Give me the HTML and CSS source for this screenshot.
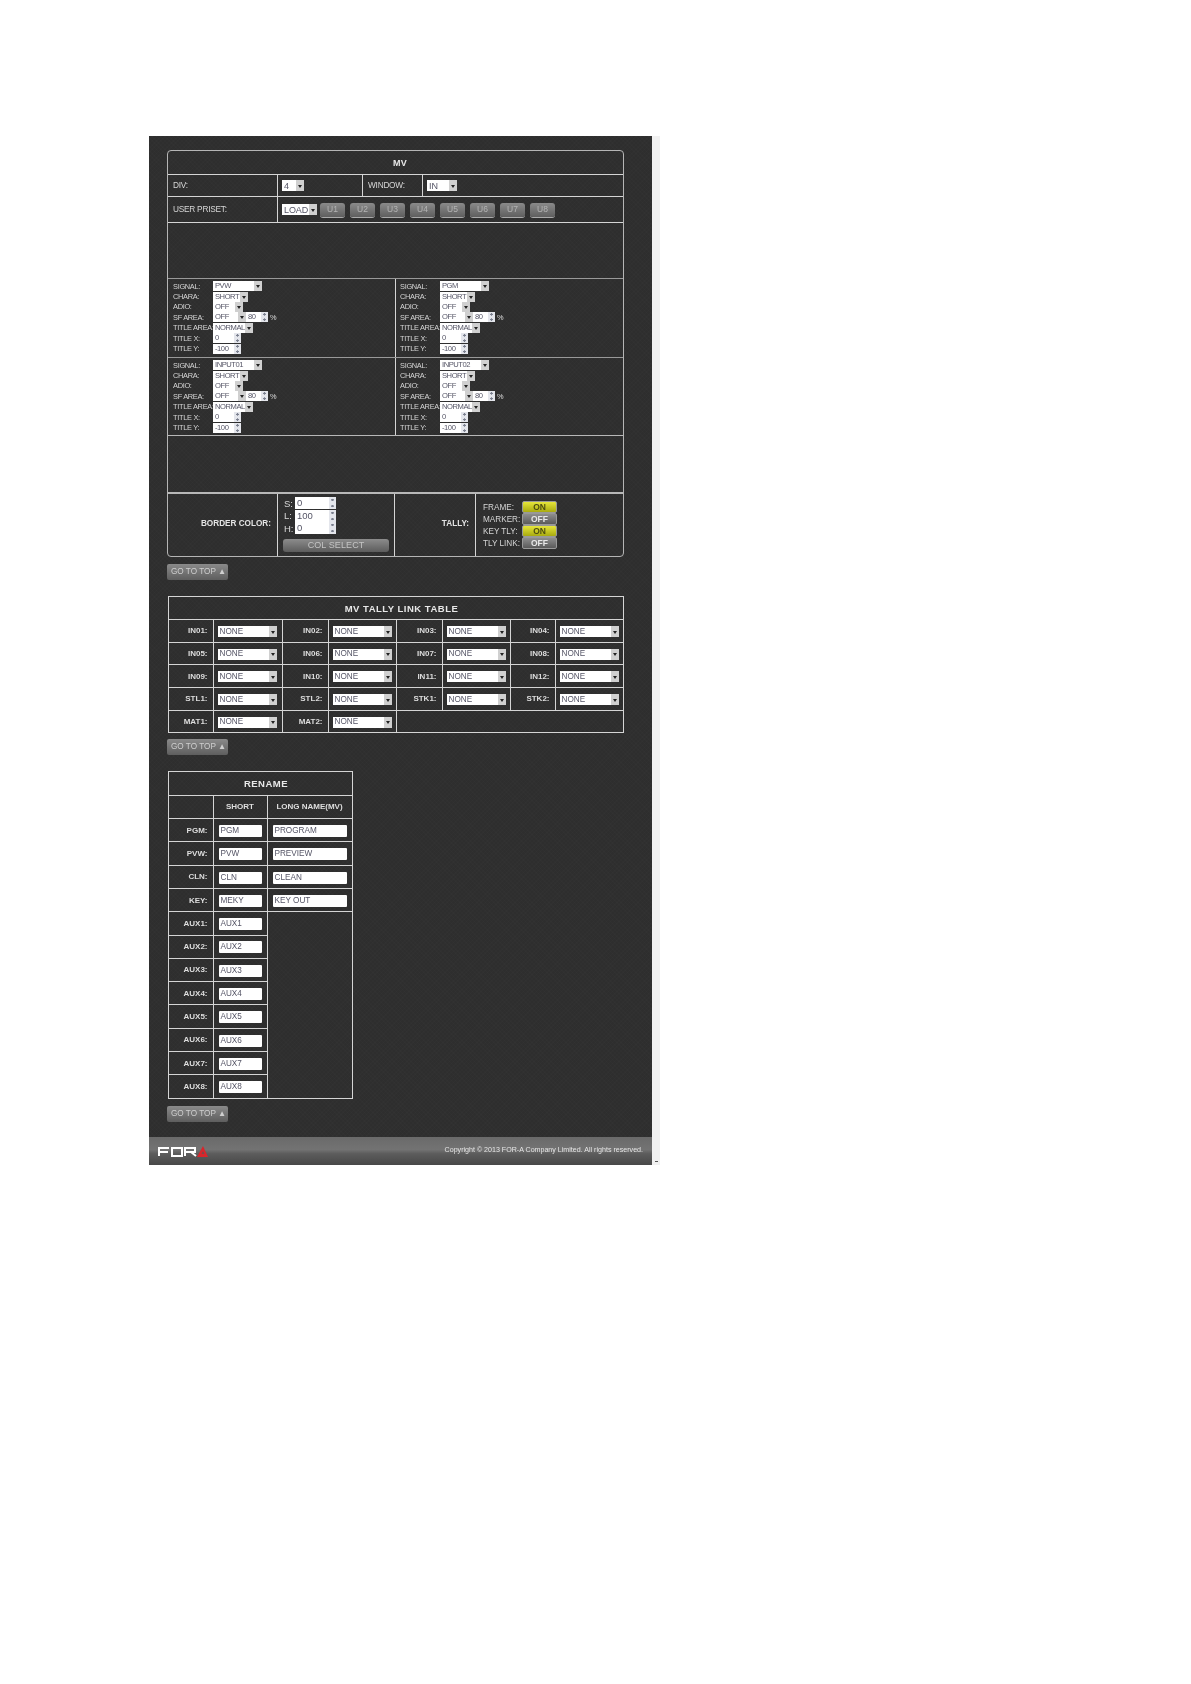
FILE: index.html
```html
<!DOCTYPE html>
<html lang="en">
<head>
<meta charset="utf-8">
<title>MV</title>
<link rel="stylesheet" href="styles.css">
</head>
<body>
<div class="page">
<main class="panel">
  <section class="mv">
    <div class="row r-title"><h2 class="title">MV</h2></div>
    <div class="row r-div">
      <div class="cell lbl">DIV:</div>
      <div class="cell ctl"><span class="sel w22">4</span></div>
      <div class="cell lbl lbl-w">WINDOW:</div>
      <div class="cell ctl ctl-w"><span class="sel w30">IN</span></div>
    </div>
    <div class="row r-preset">
      <div class="cell lbl">USER PRISET:</div>
      <div class="cell ctl presets">
        <span class="sel w35">LOAD</span>
        <span class="pbtn">U1</span><span class="pbtn">U2</span><span class="pbtn">U3</span><span class="pbtn">U4</span><span class="pbtn">U5</span><span class="pbtn">U6</span><span class="pbtn">U7</span><span class="pbtn">U8</span>
      </div>
    </div>
    <div class="row r-blank1"></div>
    <div class="row r-q1">
      <div class="quad">
        <span>SIGNAL:</span><div><span class="sel w49">PVW</span></div>
        <span>CHARA:</span><div><span class="sel w35">SHORT</span></div>
        <span>ADIO:</span><div><span class="sel w30">OFF</span></div>
        <span>SF AREA:</span><div class="sf"><span class="sel w33">OFF</span><span class="spin w22">80</span><span class="pct">%</span></div>
        <span>TITLE AREA:</span><div><span class="sel w40">NORMAL</span></div>
        <span>TITLE X:</span><div><span class="spin w28">0</span></div>
        <span>TITLE Y:</span><div><span class="spin w28">-100</span></div>
      </div>
      <div class="quad q-right">
        <span>SIGNAL:</span><div><span class="sel w49">PGM</span></div>
        <span>CHARA:</span><div><span class="sel w35">SHORT</span></div>
        <span>ADIO:</span><div><span class="sel w30">OFF</span></div>
        <span>SF AREA:</span><div class="sf"><span class="sel w33">OFF</span><span class="spin w22">80</span><span class="pct">%</span></div>
        <span>TITLE AREA:</span><div><span class="sel w40">NORMAL</span></div>
        <span>TITLE X:</span><div><span class="spin w28">0</span></div>
        <span>TITLE Y:</span><div><span class="spin w28">-100</span></div>
      </div>
    </div>
    <div class="row r-q2">
      <div class="quad">
        <span>SIGNAL:</span><div><span class="sel w49">INPUT01</span></div>
        <span>CHARA:</span><div><span class="sel w35">SHORT</span></div>
        <span>ADIO:</span><div><span class="sel w30">OFF</span></div>
        <span>SF AREA:</span><div class="sf"><span class="sel w33">OFF</span><span class="spin w22">80</span><span class="pct">%</span></div>
        <span>TITLE AREA:</span><div><span class="sel w40">NORMAL</span></div>
        <span>TITLE X:</span><div><span class="spin w28">0</span></div>
        <span>TITLE Y:</span><div><span class="spin w28">-100</span></div>
      </div>
      <div class="quad q-right">
        <span>SIGNAL:</span><div><span class="sel w49">INPUT02</span></div>
        <span>CHARA:</span><div><span class="sel w35">SHORT</span></div>
        <span>ADIO:</span><div><span class="sel w30">OFF</span></div>
        <span>SF AREA:</span><div class="sf"><span class="sel w33">OFF</span><span class="spin w22">80</span><span class="pct">%</span></div>
        <span>TITLE AREA:</span><div><span class="sel w40">NORMAL</span></div>
        <span>TITLE X:</span><div><span class="spin w28">0</span></div>
        <span>TITLE Y:</span><div><span class="spin w28">-100</span></div>
      </div>
    </div>
    <div class="row r-blank2"></div>
    <div class="row r-bottom">
      <div class="cell blbl">BORDER COLOR:</div>
      <div class="cell color">
        <div class="sli"><span>S:</span><span class="spin w41">0</span></div>
        <div class="sli"><span>L:</span><span class="spin w41">100</span></div>
        <div class="sli"><span>H:</span><span class="spin w41">0</span></div>
        <span class="colbtn">COL SELECT</span>
      </div>
      <div class="cell blbl">TALLY:</div>
      <div class="cell tally">
        <span>FRAME:</span><span class="led on">ON</span>
        <span>MARKER:</span><span class="led">OFF</span>
        <span>KEY TLY:</span><span class="led on">ON</span>
        <span>TLY LINK:</span><span class="led">OFF</span>
      </div>
    </div>
  </section>

  <a class="top top1">GO TO TOP &#9650;</a>

  <table class="tbl link">
    <colgroup><col class="c45"><col class="c69"><col class="c46"><col class="c68"><col class="c46"><col class="c68"><col class="c45"><col></colgroup>
    <tr class="h23"><th colspan="8" class="ttl">MV TALLY LINK TABLE</th></tr>
    <tr>
      <th>IN01:</th><td><span class="sel w59">NONE</span></td><th>IN02:</th><td><span class="sel w59">NONE</span></td><th>IN03:</th><td><span class="sel w59">NONE</span></td><th>IN04:</th><td><span class="sel w59">NONE</span></td>
    </tr>
    <tr>
      <th>IN05:</th><td><span class="sel w59">NONE</span></td><th>IN06:</th><td><span class="sel w59">NONE</span></td><th>IN07:</th><td><span class="sel w59">NONE</span></td><th>IN08:</th><td><span class="sel w59">NONE</span></td>
    </tr>
    <tr>
      <th>IN09:</th><td><span class="sel w59">NONE</span></td><th>IN10:</th><td><span class="sel w59">NONE</span></td><th>IN11:</th><td><span class="sel w59">NONE</span></td><th>IN12:</th><td><span class="sel w59">NONE</span></td>
    </tr>
    <tr>
      <th>STL1:</th><td><span class="sel w59">NONE</span></td><th>STL2:</th><td><span class="sel w59">NONE</span></td><th>STK1:</th><td><span class="sel w59">NONE</span></td><th>STK2:</th><td><span class="sel w59">NONE</span></td>
    </tr>
    <tr>
      <th>MAT1:</th><td><span class="sel w59">NONE</span></td><th>MAT2:</th><td><span class="sel w59">NONE</span></td><td colspan="4"></td>
    </tr>
  </table>

  <a class="top top2">GO TO TOP &#9650;</a>

  <table class="tbl rename">
    <colgroup><col class="c45"><col class="c54"><col></colgroup>
    <tr><th colspan="3" class="ttl">RENAME</th></tr>
    <tr><th></th><th class="ctr">SHORT</th><th class="ctr">LONG NAME(MV)</th></tr>
    <tr><th>PGM:</th><td><span class="txt s">PGM</span></td><td><span class="txt l">PROGRAM</span></td></tr>
    <tr><th>PVW:</th><td><span class="txt s">PVW</span></td><td><span class="txt l">PREVIEW</span></td></tr>
    <tr><th>CLN:</th><td><span class="txt s">CLN</span></td><td><span class="txt l">CLEAN</span></td></tr>
    <tr><th>KEY:</th><td><span class="txt s">MEKY</span></td><td><span class="txt l">KEY OUT</span></td></tr>
    <tr><th>AUX1:</th><td><span class="txt s">AUX1</span></td><td rowspan="8"></td></tr>
    <tr><th>AUX2:</th><td><span class="txt s">AUX2</span></td></tr>
    <tr><th>AUX3:</th><td><span class="txt s">AUX3</span></td></tr>
    <tr><th>AUX4:</th><td><span class="txt s">AUX4</span></td></tr>
    <tr><th>AUX5:</th><td><span class="txt s">AUX5</span></td></tr>
    <tr><th>AUX6:</th><td><span class="txt s">AUX6</span></td></tr>
    <tr><th>AUX7:</th><td><span class="txt s">AUX7</span></td></tr>
    <tr><th>AUX8:</th><td><span class="txt s">AUX8</span></td></tr>
  </table>

  <a class="top top3">GO TO TOP &#9650;</a>

  <footer class="foot">
    <svg class="logo" viewBox="0 0 50 11" width="50" height="11" aria-label="FOR-A logo">
      <path d="M1 10V2H11M1 6H10" fill="none" stroke="#fff" stroke-width="2"/>
      <path d="M14 2H24V10H14Z" fill="none" stroke="#fff" stroke-width="2"/>
      <path d="M27 10V2H37V6H27M33 6L38 10" fill="none" stroke="#fff" stroke-width="2"/>
      <path d="M39 11L45 0L50 11Z" fill="#d8262c"/>
      <path d="M43.5 8L45 5L46.500 8Z" fill="#7a4a4a"/>
    </svg>
    <span class="copy">Copyright &copy; 2013 FOR-A Company Limited. All rights reserved.</span>
  </footer>
</main>
<aside class="bar"><span class="bar-arrow"></span></aside>
</div>
</body>
</html>
```
FILE: styles.css
```css
* { box-sizing: border-box; }
html, body { margin: 0; background: #fff; }
body { font-family: "Liberation Sans", Arial, sans-serif; color: #d8d8d8; min-height: 1684px; }
.page { display: flex; align-items: stretch; padding: 136px 0 0 149px; }
.panel {
  width: 503px; height: 1029px; display: flex; flex-direction: column;
  padding: 14px 0 0 18px;
  background-color: #2e2e2e;
  background-image: repeating-linear-gradient(45deg, rgba(255,255,255,.012) 0 1px, transparent 1px 3px),
                    repeating-linear-gradient(-45deg, rgba(255,255,255,.012) 0 1px, transparent 1px 3px);
  filter: blur(.35px);
}
.bar { width: 8px; height: 1029px; background: #f1f1f1; position: relative; }
.bar-arrow { position: absolute; left: 3px; bottom: 3px; width: 3px; height: 1px; background: #555; }

/* MV block */
.mv {
  width: 457px; height: 407px; border: 1px solid #b5b5b5; border-radius: 4px;
  display: grid; grid-template-rows: 23px 22px 26px 56px 79px 78px 57px 64px;
}
.row { border-top: 1px solid #d5d5d5; display: grid; }
.r-title { border-top: 0; place-items: center; padding: 1px 0 0 9px; }
.title { margin: 0; font-size: 9px; font-weight: bold; letter-spacing: .3px; color: #e8e8e8; }
.r-div { grid-template-columns: 109px 85px 60px 1fr; }
.r-preset { grid-template-columns: 109px 1fr; border-top-width: 1px; }
.r-q1, .r-q2 { grid-template-columns: 227px 1fr; border-top-color: #999; }
.r-blank2 { border-top-color: #b8b8b8; }
.r-bottom { grid-template-columns: 109px 117px 81px 1fr; border-top: 2px solid #b8b8b8; }
.cell { display: flex; align-items: center; border-left: 1px solid #d5d5d5; font-size: 8.300px; letter-spacing: -.25px; }
.cell:first-child { border-left: 0; }
.lbl { padding: 0 0 1px 5px; color: #d6d6d6; }
.ctl { padding-left: 4px; letter-spacing: 0; }
.lbl-w { padding-left: 5px; }
.presets { gap: 5px; }
.presets .sel { margin-right: -2px; }
.pbtn {
  width: 25px; height: 14px; border-radius: 3px; background: linear-gradient(#8a8a8a, #5f5f5f);
  color: #b4b4b4; font-size: 8.500px; text-align: center; line-height: 13px;
  box-shadow: 0 1px 0 #aaa;
}

/* select / spinner */
.sel, .spin, .txt {
  display: inline-flex; align-items: center; background: #fff; color: #556; font-size: 7.600px;
  height: 10px; line-height: 10px; vertical-align: middle; padding-left: 2px; position: relative;
  overflow: hidden; white-space: nowrap; letter-spacing: -.45px;
}
.ctl .sel { height: 11px; font-size: 9px; letter-spacing: -.1px; }
.sel::after {
  content: ""; position: absolute; right: 0; top: 0; bottom: 0; width: 8px; background: #d0d0d0;
}
.sel::before {
  content: ""; position: absolute; right: 2px; top: 50%; margin-top: -1px; z-index: 1;
  border: 2px solid transparent; border-top: 3px solid #222; border-bottom: 0;
}
.spin::after {
  content: ""; position: absolute; right: 0; top: 0; bottom: 0; width: 7px;
  background: radial-gradient(circle at 50% 24%, #7a7f8e 1px, transparent 1.4px),
              radial-gradient(circle at 50% 76%, #7a7f8e 1px, transparent 1.4px), #e4e6ec;
}
.w22 { width: 22px; } .w30 { width: 30px; } .w35 { width: 35px; } .w49 { width: 49px; }
.w33 { width: 33px; } .w40 { width: 40px; } .w28 { width: 28px; }
.w41 { width: 41px; height: 12px; font-size: 9.500px; letter-spacing: 0; }
.w59 { width: 59px; height: 11px; font-size: 8.200px; letter-spacing: 0; }

/* quad cells */
.quad {
  display: grid; grid-template-columns: 40px 1fr; grid-auto-rows: 10.400px; align-items: center;
  padding: 2px 0 0 5px; font-size: 7.400px; letter-spacing: -.3px; color: #d6d6d6; white-space: nowrap;
}
.q-right { border-left: 1px solid #d5d5d5; padding-left: 4px; }
.quad > div { display: flex; align-items: center; }
.sf .pct { margin-left: 2px; color: #ddd; }

/* bottom row */
.blbl { justify-content: flex-end; padding: 0 6px 4px 0; font-weight: bold; font-size: 8.200px; letter-spacing: 0; color: #e4e4e4; }
.color { display: flex; flex-direction: column; align-items: flex-start; padding: 3px 0 0 5px; font-size: 9.500px; letter-spacing: 0; }
.sli { display: flex; height: 12.500px; align-items: center; gap: 5px; margin-left: 1px; width: 60px; }
.sli > span:first-child { width: 6px; }
.colbtn {
  margin-top: 4px; width: 106px; height: 13px; border-radius: 3px; background: linear-gradient(#8c8c8c, #5c5c5c);
  color: #c4c4c4; text-align: center; font-size: 9px; line-height: 13px; letter-spacing: .1px;
}
.tally {
  display: grid; grid-template-columns: 39px 35px; grid-auto-rows: 12px; align-content: center;
  padding-left: 7px; font-size: 8.200px; letter-spacing: 0; color: #d6d6d6; white-space: nowrap; align-items: center;
}
.led {
  height: 12px; border: 1px solid #999; border-radius: 2px; background: linear-gradient(#8e8e8e, #5a5a5a);
  color: #e8e8e8; font-size: 8.500px; font-weight: bold; text-align: center; line-height: 10px;
}
.led.on { background: linear-gradient(#e6e63a, #a8aa10); color: #4c4c10; }

/* go to top */
.top {
  display: block; width: 61px; height: 16px; border-radius: 2px; background: linear-gradient(#8a8a8a, #5e5e5e);
  color: #cfcfcf; font-size: 8.200px; line-height: 15px; padding-left: 4px; white-space: nowrap;
}
.top1 { margin-top: 7px; }
.top2 { margin-top: 6px; }
.top3 { margin-top: 7px; }

/* tables */
.tbl { border-collapse: collapse; table-layout: fixed; }
.tbl th, .tbl td { border: 1px solid #d5d5d5; padding: 0; vertical-align: middle; }
.tbl th { text-align: right; padding-right: 5px; font-size: 8px; font-weight: bold; color: #dedede; }
.tbl td { padding-left: 4px; }
.tbl .ttl { text-align: center; font-size: 9.500px; color: #e8e8e8; letter-spacing: .5px; padding: 0 0 0 12px; }
.tbl .ctr { text-align: center; padding: 0; }
.c45 { width: 45px; } .c46 { width: 46px; } .c54 { width: 54px; } .c68 { width: 68px; } .c69 { width: 69px; }
.link { width: 456px; margin: 16px 0 0 .5px; }
.link tr { height: 22.700px; }
.link .h23 { height: 23px; }
.rename { width: 185px; margin: 16px 0 0 .5px; }
.rename tr { height: 23.300px; }
.txt { height: 12px; line-height: 12px; font-size: 8.200px; letter-spacing: 0; border-radius: 1px; }
.s { width: 43px; margin-left: 1px; }
.l { width: 74px; margin-left: 1px; }

/* footer */
.foot {
  margin: auto 0 0 -18px; height: 28px; display: flex; align-items: center; justify-content: space-between;
  padding: 0 9px 2px 9px;
  background: linear-gradient(#6a6a6a 0, #737373 45%, #5c5c5c 60%, #484848 100%);
}
.logo { display: block; margin-top: 2px; }
.copy { font-size: 7.100px; color: #e6e6e6; white-space: nowrap; }
```
